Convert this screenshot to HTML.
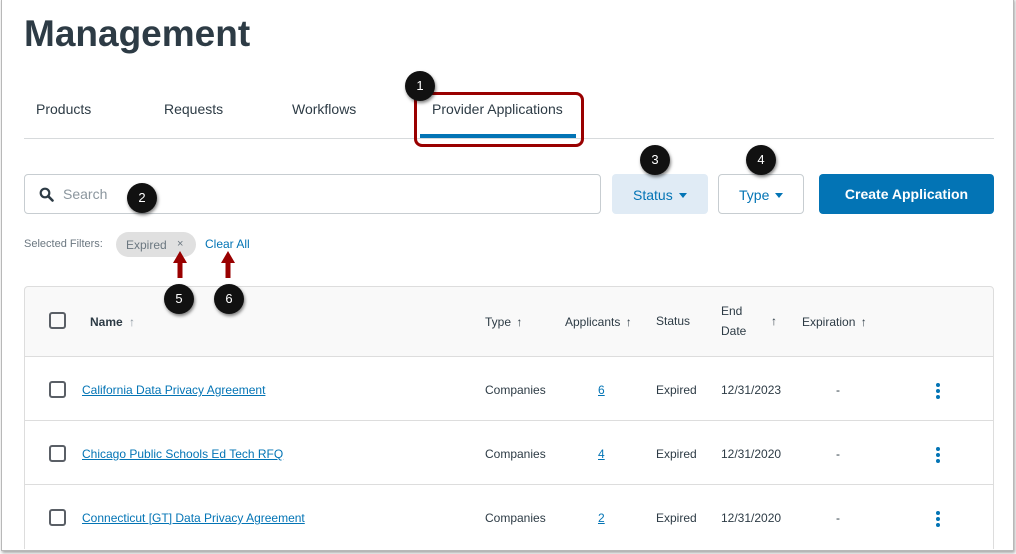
<!DOCTYPE html>
<html><head><meta charset="utf-8"><style>
*{box-sizing:border-box;margin:0;padding:0}
body{width:1016px;height:554px;background:#fff;font-family:"Liberation Sans",sans-serif;position:relative;overflow:hidden;color:#2d3b45}
.a{position:absolute}
.frame{left:1px;top:-2px;width:1013px;height:553px;border:1px solid #b8b8b8;box-shadow:1px 2px 3px rgba(0,0,0,.35)}
.tab{top:101px;font-size:14px;color:#2d3b45}
.badge{width:30px;height:30px;border-radius:50%;background:#111;color:#fff;font-size:13px;text-align:center;line-height:30px;box-shadow:1px 2px 3px rgba(0,0,0,.5)}
.th{font-size:12px;color:#2d3b45}
.cb{width:17px;height:17px;border:2px solid #5a5f66;border-radius:3px;background:#fff}
.link{font-size:12px;color:#0374b5;text-decoration:underline}
.cell{font-size:12px;color:#2d3b45}
.dots{width:4px}
.dots i{display:block;width:4px;height:4px;border-radius:50%;background:#0374b5;margin-bottom:2px}
.row{left:24px;width:970px;height:64px;border-left:1px solid #ddd;border-right:1px solid #ddd;border-bottom:1px solid #ddd}
.tri{display:inline-block;width:0;height:0;border-left:4px solid transparent;border-right:4px solid transparent;border-top:5px solid #0374b5;margin-left:6px;vertical-align:2px}
</style></head><body>
<div class="a frame"></div>
<div class="a" style="left:24px;top:13px;font-size:37px;font-weight:bold;color:#2d3b45">Management</div>

<div class="a tab" style="left:36px">Products</div>
<div class="a tab" style="left:164px">Requests</div>
<div class="a tab" style="left:292px">Workflows</div>
<div class="a tab" style="left:432px">Provider Applications</div>
<div class="a" style="left:24px;top:138px;width:970px;height:1px;background:#d7dadc"></div>
<div class="a" style="left:420px;top:134px;width:156px;height:4px;background:#0374b5"></div>
<div class="a" style="left:414px;top:92px;width:170px;height:55px;border:3px solid #900;border-radius:8px"></div>
<div class="a badge" style="left:405px;top:71px">1</div>

<div class="a" style="left:24px;top:174px;width:577px;height:40px;border:1px solid #c7cdd1;border-radius:4px"></div>
<svg class="a" style="left:39px;top:187px" width="15" height="15" viewBox="0 0 15 15"><circle cx="6" cy="6" r="4.3" fill="none" stroke="#2d3b45" stroke-width="2.2"/><path d="M9.2 9.2L13.5 13.5" stroke="#2d3b45" stroke-width="2.6" stroke-linecap="round"/></svg>
<div class="a" style="left:63px;top:186px;font-size:14px;color:#8b969e">Search</div>
<div class="a badge" style="left:127px;top:183px">2</div>

<div class="a" style="left:612px;top:174px;width:96px;height:40px;background:#e0ebf5;border-radius:4px"></div>
<div class="a" style="left:633px;top:187px;font-size:14px;color:#0374b5">Status<span class="tri"></span></div>
<div class="a badge" style="left:640px;top:145px">3</div>
<div class="a" style="left:718px;top:174px;width:86px;height:40px;border:1px solid #c7cdd1;border-radius:4px"></div>
<div class="a" style="left:739px;top:187px;font-size:14px;color:#0374b5">Type<span class="tri"></span></div>
<div class="a badge" style="left:746px;top:145px">4</div>
<div class="a" style="left:819px;top:174px;width:175px;height:40px;background:#0374b5;border-radius:4px;color:#fff;font-size:14px;font-weight:bold;text-align:center;line-height:40px">Create Application</div>

<div class="a" style="left:24px;top:238px;font-size:11px;color:#6b7780">Selected Filters:</div>
<div class="a" style="left:116px;top:232px;width:80px;height:25px;border-radius:13px;background:#e0e0e0"></div>
<div class="a" style="left:126px;top:238px;font-size:12px;color:#6b7780">Expired</div>
<div class="a" style="left:177px;top:238px;font-size:11px;color:#6b7780">×</div>
<div class="a" style="left:205px;top:237px;font-size:12px;color:#0374b5">Clear All</div>
<svg class="a" style="left:170px;top:250px" width="20" height="34"><path d="M10 1L3 13H7.5V28H12.5V13H17Z" fill="#900"/></svg>
<svg class="a" style="left:218px;top:250px" width="20" height="34"><path d="M10 1L3 13H7.5V28H12.5V13H17Z" fill="#900"/></svg>

<div class="a" style="left:24px;top:286px;width:970px;height:71px;background:#f9f9f9;border:1px solid #ddd;border-radius:4px 4px 0 0"></div>
<div class="a cb" style="left:49px;top:312px;background:transparent"></div>
<div class="a th" style="left:90px;top:315px;font-weight:bold">Name <span style="color:#8b969e;font-weight:normal;margin-left:3px">↑</span></div>
<div class="a th" style="left:485px;top:315px">Type <span style="margin-left:2px">↑</span></div>
<div class="a th" style="left:565px;top:315px">Applicants <span style="margin-left:2px">↑</span></div>
<div class="a th" style="left:656px;top:314px">Status</div>
<div class="a th" style="left:721px;top:301px;line-height:20px">End<br>Date</div>
<div class="a th" style="left:771px;top:314px">↑</div>
<div class="a th" style="left:802px;top:315px">Expiration <span style="margin-left:2px">↑</span></div>
<div class="a badge" style="left:164px;top:284px">5</div>
<div class="a badge" style="left:214px;top:284px">6</div>

<div class="a row" style="top:357px"></div>
<div class="a row" style="top:421px"></div>
<div class="a row" style="top:485px;border-bottom:none"></div>

<div class="a cb" style="left:49px;top:381px"></div>
<div class="a link" style="left:82px;top:383px">California Data Privacy Agreement</div>
<div class="a cell" style="left:485px;top:383px">Companies</div>
<div class="a link" style="left:598px;top:383px">6</div>
<div class="a cell" style="left:656px;top:383px">Expired</div>
<div class="a cell" style="left:721px;top:383px">12/31/2023</div>
<div class="a cell" style="left:836px;top:383px">-</div>
<div class="a dots" style="left:936px;top:383px"><i></i><i></i><i></i></div>

<div class="a cb" style="left:49px;top:445px"></div>
<div class="a link" style="left:82px;top:447px">Chicago Public Schools Ed Tech RFQ</div>
<div class="a cell" style="left:485px;top:447px">Companies</div>
<div class="a link" style="left:598px;top:447px">4</div>
<div class="a cell" style="left:656px;top:447px">Expired</div>
<div class="a cell" style="left:721px;top:447px">12/31/2020</div>
<div class="a cell" style="left:836px;top:447px">-</div>
<div class="a dots" style="left:936px;top:447px"><i></i><i></i><i></i></div>

<div class="a cb" style="left:49px;top:509px"></div>
<div class="a link" style="left:82px;top:511px">Connecticut [GT] Data Privacy Agreement</div>
<div class="a cell" style="left:485px;top:511px">Companies</div>
<div class="a link" style="left:598px;top:511px">2</div>
<div class="a cell" style="left:656px;top:511px">Expired</div>
<div class="a cell" style="left:721px;top:511px">12/31/2020</div>
<div class="a cell" style="left:836px;top:511px">-</div>
<div class="a dots" style="left:936px;top:511px"><i></i><i></i><i></i></div>
</body></html>
